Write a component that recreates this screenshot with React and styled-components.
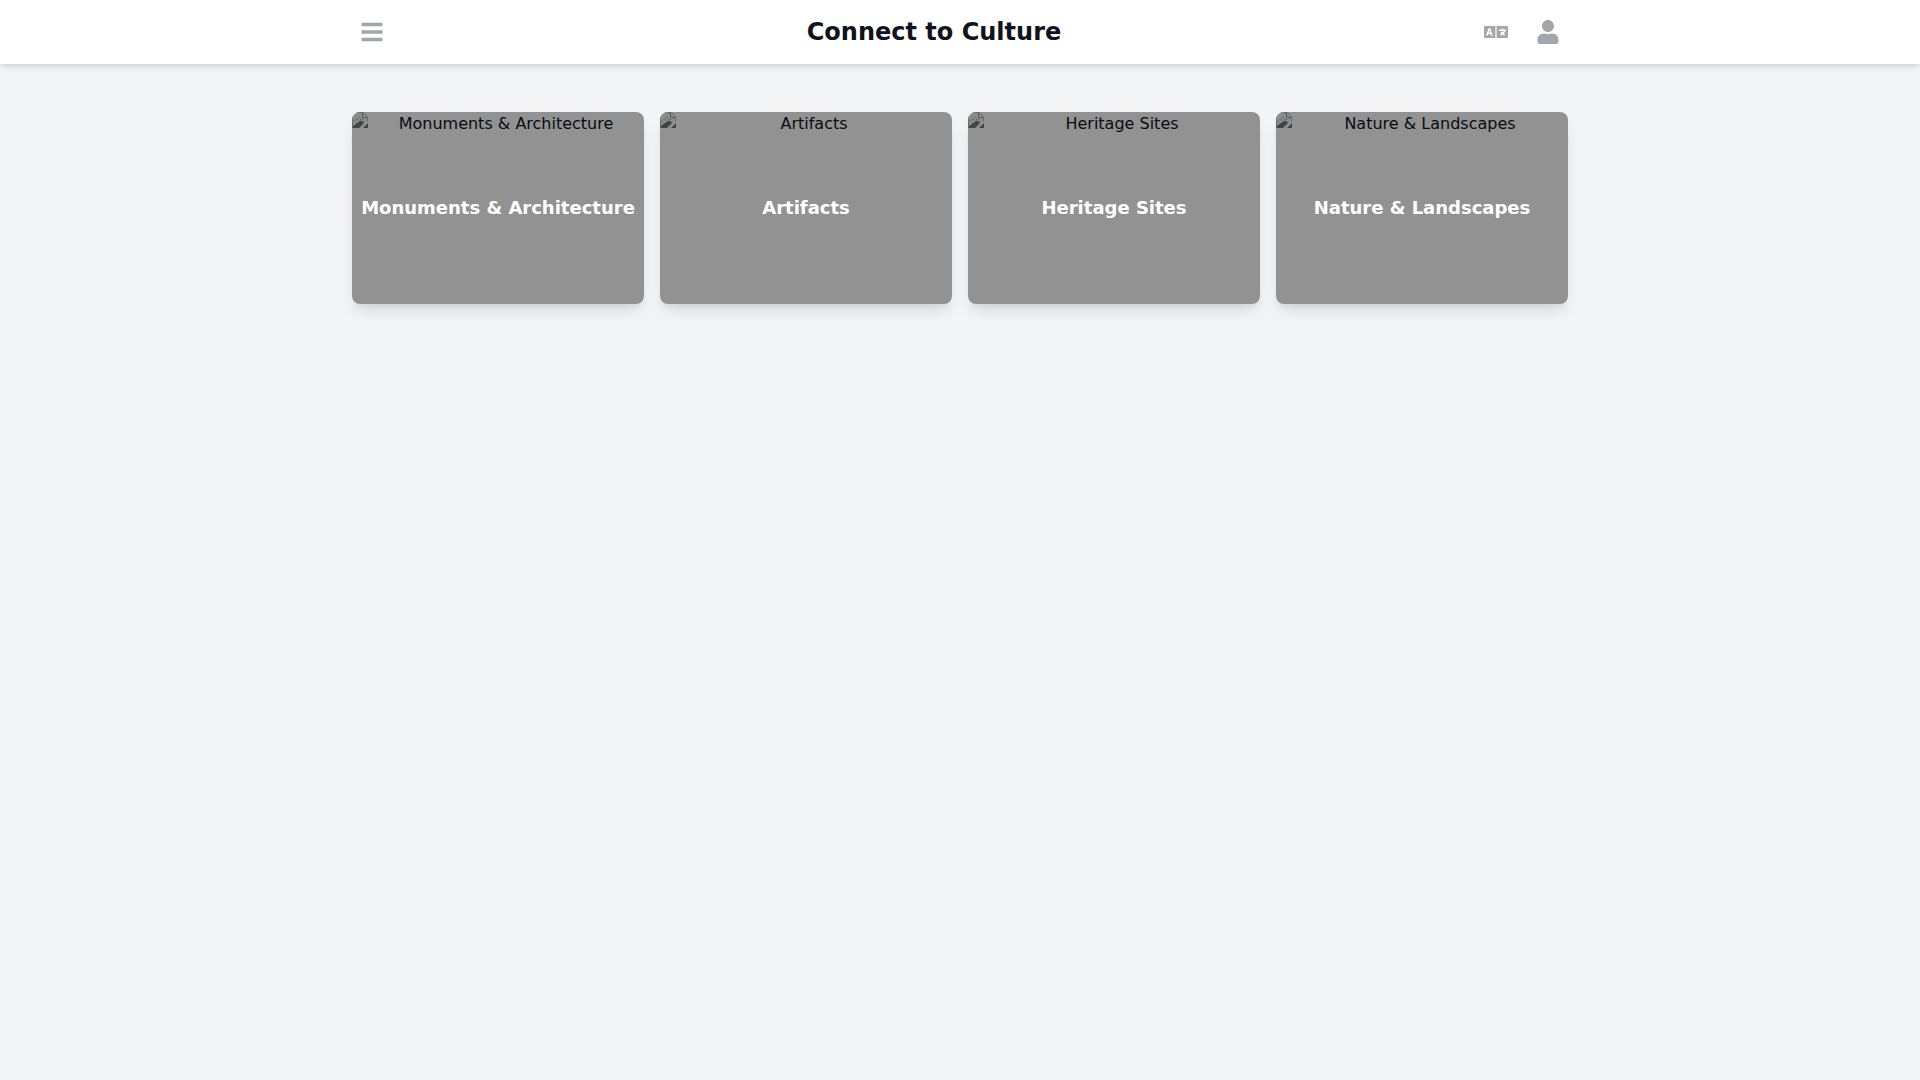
import styled, { createGlobalStyle } from "styled-components";
import { FaBars, FaLanguage, FaUser } from "react-icons/fa";

const categories = [
  { name: "Monuments & Architecture", slug: "monuments" },
  { name: "Artifacts", slug: "artifacts" },
  { name: "Heritage Sites", slug: "heritage-sites" },
  { name: "Nature & Landscapes", slug: "nature" },
];

const MissingImageIcon = () => (
  <svg width="16" height="16" viewBox="0 0 16 16" aria-hidden="true">
    <path d="M0 0h11l5 5v4l-7 7H0z" fill="#e9ecf1" />
    <path d="M.5 16V.5H11l4.500 4.500V9" fill="none" stroke="#a9aeae" />
    <path d="M10.500 1v4.500H15" fill="none" stroke="#8d9393" />
    <path
      d="M2.500 10V8M3 7.500h2M5.500 9V6M6 5.500h2M8.500 9V6M9 7.500h3M10 9.500h3"
      fill="none"
      stroke="#bcc1ca"
    />
    <path d="M1 16v-2l4-3 3-2h2l2 2-5 5z" fill="#68786b" />
    <path d="M11 16l5-5v5z" fill="#68786b" />
  </svg>
);

const CategoryCard = ({ name, slug }) => {
  return (
    <Card href={`#${slug}`}>
      <Placeholder>
        <MissingImageIcon />
        <AltText>{name}</AltText>
      </Placeholder>
      <Overlay>
        <CardTitle>{name}</CardTitle>
      </Overlay>
    </Card>
  );
};

const App = () => {
  return (
    <>
      <GlobalStyle />
      <Header>
        <HeaderInner>
          <IconButton type="button" aria-label="Open menu">
            <FaBars />
          </IconButton>
          <Title>Connect to Culture</Title>
          <Actions>
            <IconButton type="button" aria-label="Change language">
              <FaLanguage />
            </IconButton>
            <IconButton type="button" aria-label="Profile">
              <FaUser />
            </IconButton>
          </Actions>
        </HeaderInner>
      </Header>
      <Main>
        <CardGrid>
          {categories.map((category) => (
            <CategoryCard key={category.slug} {...category} />
          ))}
        </CardGrid>
      </Main>
    </>
  );
};
export default App;

const GlobalStyle = createGlobalStyle`
  *, *::before, *::after {
    box-sizing: border-box;
  }
  body {
    margin: 0;
    background-color: #f3f4f6;
    color: #0f141c;
    font-family: "DejaVu Sans", sans-serif;
    font-size: 16px;
    line-height: 24px;
  }
`;

const Header = styled.header`
  background-color: #fff;
  box-shadow: 0 4px 6px -1px rgba(0, 0, 0, 0.1),
    0 2px 4px -2px rgba(0, 0, 0, 0.1);
`;

const HeaderInner = styled.div`
  display: flex;
  align-items: center;
  justify-content: space-between;
  max-width: 1280px;
  min-height: 64px;
  margin: 0 auto;
  padding: 0 32px;
`;

const Title = styled.h1`
  margin: 0;
  font-size: 24px;
  line-height: 32px;
  font-weight: 700;
`;

const Actions = styled.div`
  display: flex;
  align-items: center;
  gap: 12px;
`;

const IconButton = styled.button`
  display: flex;
  padding: 8px;
  border: none;
  background: none;
  color: #a3a6ab;
  font-size: 24px;
  cursor: pointer;
`;

const Main = styled.main`
  max-width: 1280px;
  margin: 0 auto;
  padding: 48px 32px;
`;

const CardGrid = styled.div`
  display: grid;
  grid-template-columns: repeat(4, 1fr);
  gap: 16px;
`;

const Card = styled.a`
  position: relative;
  height: 192px;
  border-radius: 8px;
  overflow: hidden;
  color: inherit;
  text-decoration: none;
  box-shadow: 0 10px 15px -3px rgba(0, 0, 0, 0.1),
    0 4px 6px -4px rgba(0, 0, 0, 0.1);
`;

const Placeholder = styled.div`
  display: flex;
  align-items: flex-start;
  height: 100%;
  background-color: #f3f4f6;
`;

const AltText = styled.span`
  flex: 1;
  text-align: center;
`;

const Overlay = styled.div`
  position: absolute;
  inset: 0;
  display: flex;
  align-items: center;
  justify-content: center;
  background-color: rgba(0, 0, 0, 0.4);
`;

const CardTitle = styled.h2`
  margin: 0;
  color: #fff;
  font-size: 18px;
  line-height: 28px;
  font-weight: 700;
`;
